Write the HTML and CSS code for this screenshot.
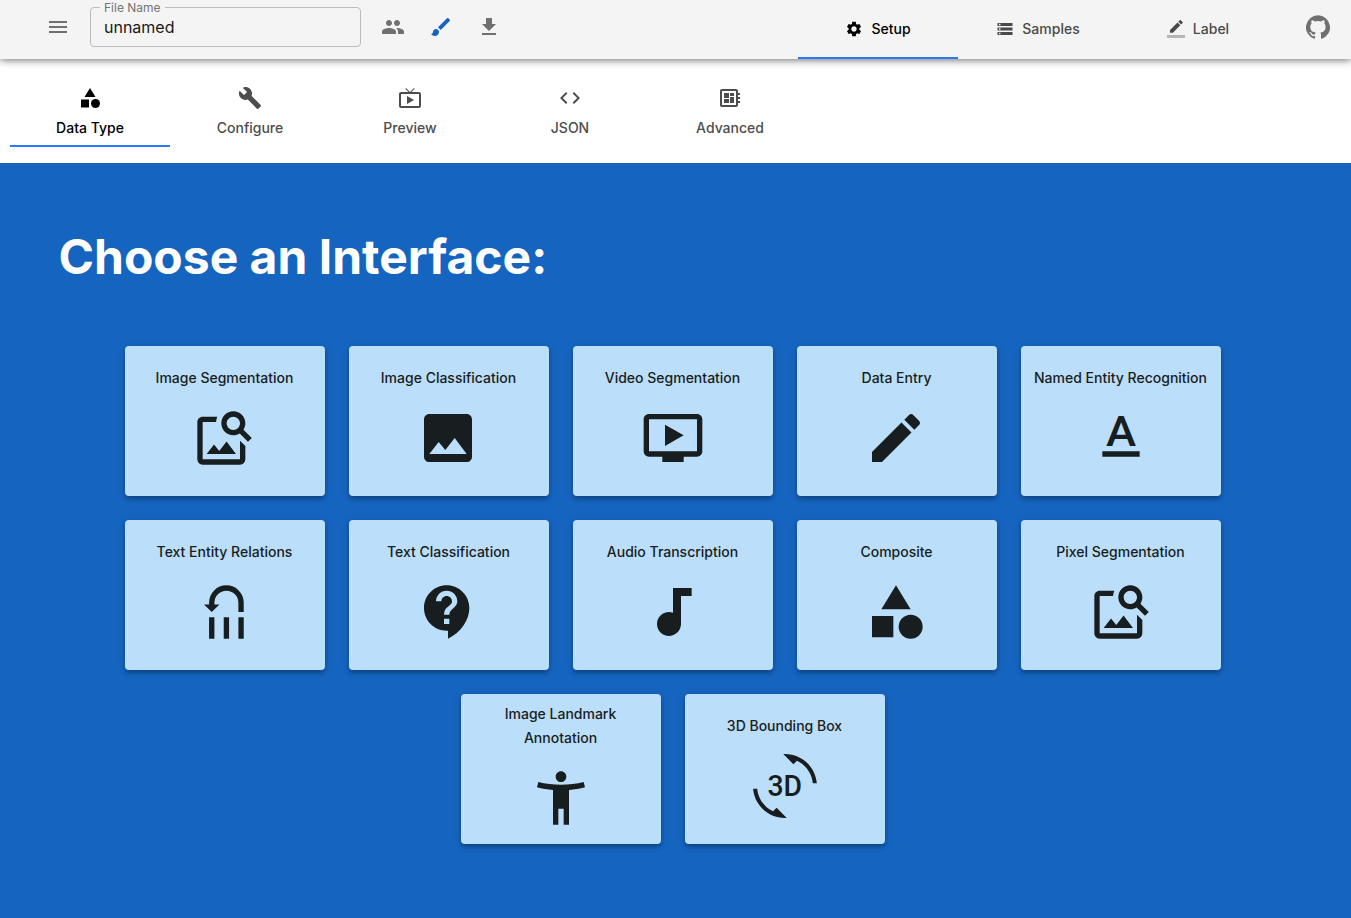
FILE: index.html
```html
<!DOCTYPE html>
<html lang="en">
<head>
<meta charset="utf-8">
<title>Annotation Setup</title>
<link rel="stylesheet" href="styles.css">
</head>
<body>
<header class="topbar">
  <div class="tools">
    <button class="icon-btn menu-btn" aria-label="Menu"><svg class="icon" viewBox="0 0 24 24"><path d="M3 18h18v-2H3v2zm0-5h18v-2H3v2zm0-7v2h18V6H3z"/></svg></button>
    <fieldset class="field"><legend class="field-label">File Name</legend><div class="field-value">unnamed</div></fieldset>
    <button class="icon-btn" aria-label="Collaborate"><svg class="icon" viewBox="0 0 24 24"><path d="M16 11c1.66 0 2.99-1.34 2.99-3S17.66 5 16 5c-1.66 0-3 1.34-3 3s1.34 3 3 3zm-8 0c1.66 0 2.99-1.34 2.99-3S9.66 5 8 5C6.34 5 5 6.34 5 8s1.34 3 3 3zm0 2c-2.33 0-7 1.17-7 3.5V19h14v-2.5c0-2.33-4.67-3.5-7-3.5zm8 0c-.29 0-.62.02-.97.05 1.16.84 1.97 1.97 1.97 3.45V19h6v-2.5c0-2.33-4.67-3.5-7-3.5z"/></svg></button>
    <button class="icon-btn accent" aria-label="Theme"><svg class="icon" viewBox="0 0 24 24"><path d="M7 14c-1.66 0-3 1.34-3 3 0 1.31-1.16 2-2 2 .92 1.22 2.49 2 4 2 2.21 0 4-1.79 4-4 0-1.66-1.34-3-3-3zm13.71-9.37l-1.34-1.34c-.39-.39-1.02-.39-1.41 0L9 12.25 11.75 15l8.96-8.96c.39-.39.39-1.02 0-1.41z"/></svg></button>
    <button class="icon-btn" aria-label="Download"><svg class="icon" viewBox="0 0 24 24"><path d="M19 9h-4V3H9v6H5l7 7 7-7zM5 18v2h14v-2H5z"/></svg></button>
  </div>
  <nav class="main-tabs">
    <a class="main-tab active"><svg class="icon small" viewBox="0 0 24 24"><path d="M19.14 12.94c.04-.3.06-.61.06-.94 0-.32-.02-.64-.07-.94l2.03-1.58c.18-.14.23-.41.12-.61l-1.92-3.32c-.12-.22-.37-.29-.59-.22l-2.39.96c-.5-.38-1.03-.7-1.62-.94l-.36-2.54c-.04-.24-.24-.41-.48-.41h-3.84c-.24 0-.43.17-.47.41l-.36 2.54c-.59.24-1.13.57-1.62.94l-2.39-.96c-.22-.08-.47 0-.59.22L2.74 8.87c-.12.21-.08.47.12.61l2.03 1.58c-.05.3-.09.63-.09.94s.02.64.07.94l-2.03 1.58c-.18.14-.23.41-.12.61l1.92 3.32c.12.22.37.29.59.22l2.39-.96c.5.38 1.03.7 1.62.94l.36 2.54c.05.24.24.41.48.41h3.84c.24 0 .44-.17.47-.41l.36-2.54c.59-.24 1.13-.56 1.62-.94l2.39.96c.22.08.47 0 .59-.22l1.92-3.32c.12-.22.07-.47-.12-.61l-2.01-1.58zM12 15.6c-1.98 0-3.6-1.62-3.6-3.6s1.62-3.6 3.6-3.6 3.6 1.62 3.6 3.6-1.62 3.6-3.6 3.6z"/></svg><span>Setup</span></a>
    <a class="main-tab"><svg class="icon small" viewBox="0 0 24 24"><path d="M2 20h20v-4H2v4zm2-3h2v2H4v-2zM2 4v4h20V4H2zm4 3H4V5h2v2zm-4 7h20v-4H2v4zm2-3h2v2H4v-2z"/></svg><span>Samples</span></a>
    <a class="main-tab"><svg class="icon small" viewBox="0 0 24 24"><path d="M17.75 7L14 3.25l-10 10V17h3.75l10-10zm2.96-2.96c.39-.39.39-1.02 0-1.41L18.37.29c-.39-.39-1.02-.39-1.41 0L15 2.25 18.75 6l1.96-1.96z"/><path fill-opacity=".36" d="M0 20h24v4H0z"/></svg><span>Label</span></a>
  </nav>
  <a class="github" aria-label="GitHub"><svg class="icon" viewBox="0 0 24 24"><path d="M12 .3a12 12 0 0 0-3.8 23.4c.6.1.8-.3.8-.6v-2c-3.3.7-4-1.6-4-1.6-.6-1.4-1.4-1.8-1.4-1.8-1-.7.1-.7.1-.7 1.2 0 1.9 1.2 1.9 1.2 1 1.8 2.8 1.3 3.5 1 0-.8.4-1.3.7-1.6-2.7-.3-5.5-1.3-5.5-6 0-1.2.5-2.3 1.3-3.1-.2-.4-.6-1.6 0-3.2 0 0 1-.3 3.4 1.2a11.5 11.5 0 0 1 6 0c2.3-1.5 3.3-1.2 3.3-1.2.6 1.6.2 2.8 0 3.2.9.8 1.3 1.9 1.3 3.2 0 4.6-2.8 5.6-5.5 5.9.5.4.9 1 .9 2.2v3.3c0 .3.1.7.8.6A12 12 0 0 0 12 .3"/></svg></a>
</header>
<nav class="sub-tabs">
  <a class="sub-tab active"><svg class="icon" viewBox="0 0 24 24"><path d="M12 2l-5.5 9h11zM3 13.5h8v8H3z"/><circle cx="17.5" cy="17.5" r="4.5"/></svg><span>Data Type</span></a>
  <a class="sub-tab"><svg class="icon" viewBox="0 0 24 24"><path d="M22.7 19l-9.1-9.1c.9-2.3.4-5-1.5-6.9-2-2-5-2.4-7.4-1.3L9 6 6 9 1.6 4.7C.4 7.1.9 10.1 2.9 12.1c1.9 1.9 4.6 2.4 6.9 1.5l9.1 9.1c.4.4 1 .4 1.4 0l2.3-2.3c.5-.4.5-1.1.1-1.4z"/></svg><span>Configure</span></a>
  <a class="sub-tab"><svg class="icon" viewBox="0 0 24 24"><path d="M21 6h-7.59l3.29-3.29L16 2l-4 4-4-4-.7.71L10.59 6H3c-1.1 0-2 .89-2 2v12c0 1.1.9 2 2 2h18c1.1 0 2-.9 2-2V8c0-1.11-.9-2-2-2zm0 14H3V8h18v12zM9 10v8l7-4z"/></svg><span>Preview</span></a>
  <a class="sub-tab"><svg class="icon" viewBox="0 0 24 24"><path d="M9.4 16.6L4.8 12l4.6-4.6L8 6l-6 6 6 6 1.4-1.4zm5.2 0l4.6-4.6-4.6-4.6L16 6l6 6-6 6-1.4-1.4z"/></svg><span>JSON</span></a>
  <a class="sub-tab"><svg class="icon" viewBox="0 0 24 24"><path d="M22 9V7h-2V5c0-1.1-.9-2-2-2H4c-1.1 0-2 .9-2 2v14c0 1.1.9 2 2 2h14c1.1 0 2-.9 2-2v-2h2v-2h-2v-2h2v-2h-2V9h2zm-4 10H4V5h14v14zM6 13h5v4H6zm6-6h4v3h-4zM6 7h5v5H6zm6 4h4v6h-4z"/></svg><span>Advanced</span></a>
</nav>
<main class="chooser">
  <h1 class="title">Choose an Interface:</h1>
  <div class="cards">
    <button class="card"><span class="card-body"><span class="card-name">Image Segmentation</span><svg class="icon large lean-left" viewBox="0 0 24 24"><path d="M18 13v7H4V6h5.02c.05-.71.22-1.38.48-2H4c-1.1 0-2 .9-2 2v14c0 1.1.9 2 2 2h14c1.1 0 2-.9 2-2v-5l-2-2zm-1.5 5h-11l2.75-3.53 1.96 2.36 2.75-3.54zm2.8-9.11c.44-.7.7-1.51.7-2.39C20 4.01 17.99 2 15.5 2S11 4.01 11 6.5s2.01 4.5 4.49 4.5c.88 0 1.7-.26 2.39-.7L21 13.42 22.42 12 19.3 8.89zM15.5 9C14.12 9 13 7.88 13 6.5S14.12 4 15.5 4 18 5.12 18 6.5 16.88 9 15.5 9z"/></svg></span></button>
    <button class="card"><span class="card-body"><span class="card-name">Image Classification</span><svg class="icon large lean-left" viewBox="0 0 24 24"><path d="M21 19V5c0-1.1-.9-2-2-2H5c-1.1 0-2 .9-2 2v14c0 1.1.9 2 2 2h14c1.1 0 2-.9 2-2zM8.5 13.5l2.5 3.01L14.5 12l4.5 6H5l3.5-4.5z"/></svg></span></button>
    <button class="card"><span class="card-body"><span class="card-name">Video Segmentation</span><svg class="icon large lean-right" viewBox="0 0 24 24"><path d="M21 3H3c-1.11 0-2 .89-2 2v12c0 1.1.89 2 2 2h5v2h8v-2h5c1.1 0 1.99-.9 1.99-2L23 5c0-1.11-.9-2-2-2zm0 14H3V5h18v12zm-5-6l-7 4V7z"/></svg></span></button>
    <button class="card"><span class="card-body"><span class="card-name">Data Entry</span><svg class="icon large lean-left" viewBox="0 0 24 24"><path d="M3 17.25V21h3.75L17.81 9.94l-3.75-3.75L3 17.25zM20.71 7.04c.39-.39.39-1.02 0-1.41l-2.34-2.34c-.39-.39-1.02-.39-1.41 0l-1.83 1.83 3.75 3.75 1.83-1.83z"/></svg></span></button>
    <button class="card"><span class="card-body"><span class="card-name">Named Entity Recognition</span><svg class="icon large lean-right" viewBox="0 0 24 24"><path d="M5 17v2h14v-2z"/><text class="glyph" x="6.4" y="15" font-size="15.9" textLength="11.3" lengthAdjust="spacingAndGlyphs">A</text></svg></span></button>
    <button class="card"><span class="card-body"><span class="card-name">Text Entity Relations</span><svg class="icon large lean-left" viewBox="0 0 24 24"><path d="M6.4 14h2v8h-2zM11.9 14h2v8h-2zM17.4 14h2v8h-2zM4.5 9.15h5.8L7.4 12z"/><path class="line" d="M7.4 9.5v-1a5.5 5.5 0 0 1 11 0V12"/></svg></span></button>
    <button class="card"><span class="card-body"><span class="card-name">Text Classification</span><svg class="icon large lean-left" viewBox="0 0 24 24"><path d="M11.5 2C6.81 2 3 5.81 3 10.5S6.81 19 11.5 19h.5v3c4.86-2.34 8-7 8-11.5C20 5.81 16.19 2 11.5 2zm1 14.5h-2v-2h2v2zm0-3.5h-2c0-3.25 3-3 3-5 0-1.1-.9-2-2-2s-2 .9-2 2h-2c0-2.21 1.79-4 4-4s4 1.79 4 4c0 2.5-3 2.75-3 5z"/></svg></span></button>
    <button class="card"><span class="card-body"><span class="card-name">Audio Transcription</span><svg class="icon large lean-right" viewBox="0 0 24 24"><path d="M12 3v9.28c-.47-.17-.97-.28-1.5-.28C8.01 12 6 14.01 6 16.5S8.01 21 10.5 21c2.31 0 4.2-1.75 4.45-4H15V6h4V3h-7z"/></svg></span></button>
    <button class="card"><span class="card-body"><span class="card-name">Composite</span><svg class="icon large lean-left" viewBox="0 0 24 24"><path d="M12 2l-5.5 9h11zM3 13.5h8v8H3z"/><circle cx="17.5" cy="17.5" r="4.5"/></svg></span></button>
    <button class="card"><span class="card-body"><span class="card-name">Pixel Segmentation</span><svg class="icon large lean-right" viewBox="0 0 24 24"><path d="M18 13v7H4V6h5.02c.05-.71.22-1.38.48-2H4c-1.1 0-2 .9-2 2v14c0 1.1.9 2 2 2h14c1.1 0 2-.9 2-2v-5l-2-2zm-1.5 5h-11l2.75-3.53 1.96 2.36 2.75-3.54zm2.8-9.11c.44-.7.7-1.51.7-2.39C20 4.01 17.99 2 15.5 2S11 4.01 11 6.5s2.01 4.5 4.49 4.5c.88 0 1.7-.26 2.39-.7L21 13.42 22.42 12 19.3 8.89zM15.5 9C14.12 9 13 7.88 13 6.5S14.12 4 15.5 4 18 5.12 18 6.5 16.88 9 15.5 9z"/></svg></span></button>
    <button class="card"><span class="card-body"><span class="card-name">Image Landmark Annotation</span><svg class="icon large lean-right" viewBox="0 0 24 24"><path d="M20.5 6c-2.61.7-5.67 1-8.5 1s-5.89-.3-8.5-1L3 8c1.86.5 4 .83 6 1v13h2v-6h2v6h2V9c2-.17 4.14-.5 6-1l-.5-2zM12 6c1.1 0 2-.9 2-2s-.9-2-2-2-2 .9-2 2 .9 2 2 2z"/></svg></span></button>
    <button class="card"><span class="card-body"><span class="card-name">3D Bounding Box</span><svg class="icon large lean-right" viewBox="0 0 24 24"><path d="M7.52 21.48C4.25 19.94 1.91 16.76 1.55 13H.05C.56 19.16 5.71 24 12 24l.66-.03-3.81-3.81-1.33 1.32zM12 0l-.66.03 3.81 3.81 1.33-1.33c3.27 1.55 5.61 4.72 5.96 8.48h1.5C23.44 4.84 18.29 0 12 0z"/><text class="glyph" x="5.4" y="15.9" font-size="11.2" textLength="13" lengthAdjust="spacingAndGlyphs">3D</text></svg></span></button>
  </div>
</main>
</body>
</html>
```
FILE: styles.css
```css
* { box-sizing: border-box; }

body {
  margin: 0;
  min-height: 918px;
  display: flex;
  flex-direction: column;
  font-family: Inter, "Liberation Sans", sans-serif;
  background: #fff;
}

button {
  border: 0;
  padding: 0;
  background: none;
  font: inherit;
  color: inherit;
}

.icon { display: block; width: 24px; height: 24px; fill: currentColor; flex: none; }
.icon.small { width: 18px; height: 18px; }
.icon.large { width: 64px; height: 64px; }
.lean-left { margin-right: .5px; }
.lean-right { margin-left: .5px; }
.line { fill: none; stroke: currentColor; stroke-width: 2; }
.glyph { font-family: Roboto, sans-serif; font-weight: 500; }

.topbar {
  display: flex;
  align-items: flex-start;
  height: 59px;
  padding-right: 21px;
  background: #f4f4f4;
  box-shadow: 0 1px 8px rgba(0, 0, 0, .58);
}

.tools { display: flex; align-items: flex-start; flex: 1; padding-left: 46px; }
.icon-btn { padding: 15px 12px 0; color: #707070; }
.menu-btn { padding: 15px 20px 0 0; }
.accent { color: #1565c0; }

.field {
  width: 271px;
  height: 47px;
  margin: 0 8px 0 0;
  padding: 0 9px;
  border: 1px solid #bcbcbc;
  border-radius: 4px;
}
.field-label {
  padding: 0 4px;
  font-size: 12px;
  line-height: 15px;
  color: #757575;
}
.field-value {
  padding-left: 4px;
  font-size: 16px;
  line-height: 24px;
  color: #181818;
}

.main-tabs { display: flex; margin-right: 28px; }
.main-tab {
  display: flex;
  justify-content: center;
  align-items: center;
  gap: 8px;
  width: 160px;
  height: 59px;
  border-bottom: 2px solid transparent;
  font-size: 14px;
  font-weight: 500;
  color: #494949;
}
.active { color: #000; }
.main-tab.active, .sub-tab.active { border-bottom-color: #2979ff; }
.github { padding-top: 15px; color: #707070; }

.sub-tabs { display: flex; height: 104px; padding: 16px 10px; }
.sub-tab {
  display: flex;
  flex-direction: column;
  align-items: center;
  width: 160px;
  padding-top: 11px;
  border-bottom: 2px solid transparent;
  font-size: 14px;
  font-weight: 500;
  line-height: 24px;
  color: #4d4d4d;
}
.sub-tab span { padding-top: 6px; }
.sub-tab.active { color: #000; }

.chooser { flex: 1; background: #1565c0; }
.title {
  margin: 0;
  padding: 64px 58.5px 0;
  font-size: 48px;
  line-height: 60px;
  font-weight: 700;
  color: #fff;
}

.cards {
  display: flex;
  flex-wrap: wrap;
  justify-content: center;
  gap: 24px;
  width: 1345px;
  padding: 59px 100px 0;
}
.card {
  display: flex;
  justify-content: center;
  align-items: center;
  width: 200px;
  height: 150px;
  border-radius: 4px;
  background: #bbdefb;
  color: #181d20;
  box-shadow: 0 2px 4px -1px rgba(0, 0, 0, .2), 0 4px 5px 0 rgba(0, 0, 0, .14), 0 1px 10px 0 rgba(0, 0, 0, .12);
}
.card-body {
  display: flex;
  flex-direction: column;
  align-items: center;
  gap: 16px;
  padding: 0 10px 6px;
}
.card-name { font-size: 14px; font-weight: 500; line-height: 24px; text-align: center; }
```
